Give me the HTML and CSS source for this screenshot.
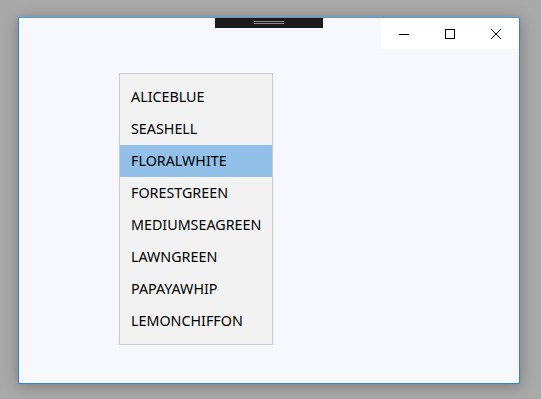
FILE: index.html
```html
<!DOCTYPE html>
<html lang="en">
<head>
    <meta charset="UTF-8">
    <title>ListBox</title>
    <link rel="stylesheet" href="styles.css">
</head>
<body>
    <div class="window">
        <div class="titlebar">
            <div></div>
            <div class="drag-handle"><span></span><span></span></div>
            <div class="caption">
                <button class="cap-btn" aria-label="Minimize">
                    <svg width="10" height="10" viewBox="0 0 10 10"><path d="M0 5.5H10" stroke="#000" stroke-width="1"/></svg>
                </button>
                <button class="cap-btn" aria-label="Maximize">
                    <svg width="10" height="10" viewBox="0 0 10 10"><rect x="0.5" y="0.5" width="9" height="9" fill="none" stroke="#000" stroke-width="1"/></svg>
                </button>
                <button class="cap-btn" aria-label="Close">
                    <svg width="10" height="10" viewBox="0 0 10 10"><path d="M0 0L10 10M10 0L0 10" stroke="#000" stroke-width="1"/></svg>
                </button>
            </div>
        </div>
        <ul class="listbox">
            <li>ALICEBLUE</li>
            <li>SEASHELL</li>
            <li class="selected">FLORALWHITE</li>
            <li>FORESTGREEN</li>
            <li>MEDIUMSEAGREEN</li>
            <li>LAWNGREEN</li>
            <li>PAPAYAWHIP</li>
            <li>LEMONCHIFFON</li>
        </ul>
    </div>
</body>
</html>
```

FILE: styles.css
```css
html, body {
    margin: 0;
    padding: 0;
    height: 100%;
}

body {
    background: #a9a9a9;
    padding: 17px 0 0 18px;
    box-sizing: border-box;
    font-family: "Noto Sans", "Open Sans", sans-serif;
}

.window {
    width: 502px;
    height: 367px;
    box-sizing: border-box;
    background: #f7f8fe;
    border: 1px solid #2b87d3;
    border-top-color: #4b9be0;
    box-shadow: 0 2px 14px rgba(0, 0, 0, 0.28);
}

.titlebar {
    display: grid;
    grid-template-columns: 1fr auto 1fr;
    height: 31px;
}

.drag-handle {
    width: 108px;
    height: 10px;
    background: #1b1b1b;
    display: flex;
    flex-direction: column;
    align-items: center;
    padding-top: 3px;
    gap: 1px;
    box-sizing: border-box;
}

.drag-handle span {
    width: 30px;
    height: 1px;
    background: #8a8a8a;
}

.caption {
    justify-self: end;
    display: flex;
    background: #fff;
}

.cap-btn {
    width: 46px;
    height: 31px;
    border: none;
    background: transparent;
    padding: 0;
    display: flex;
    align-items: center;
    justify-content: center;
}

.cap-btn svg {
    display: block;
    shape-rendering: crispEdges;
}

.listbox {
    list-style: none;
    margin: 24px 0 0 100px;
    padding: 7px 0;
    width: 154px;
    box-sizing: border-box;
    background: #f2f2f2;
    border: 1px solid #cccccc;
}

.listbox li {
    height: 32px;
    line-height: 32px;
    padding-left: 11px;
    font-size: 14.3px;
    color: #000;
}

.listbox li.selected {
    background: #92c0e8;
}
```
